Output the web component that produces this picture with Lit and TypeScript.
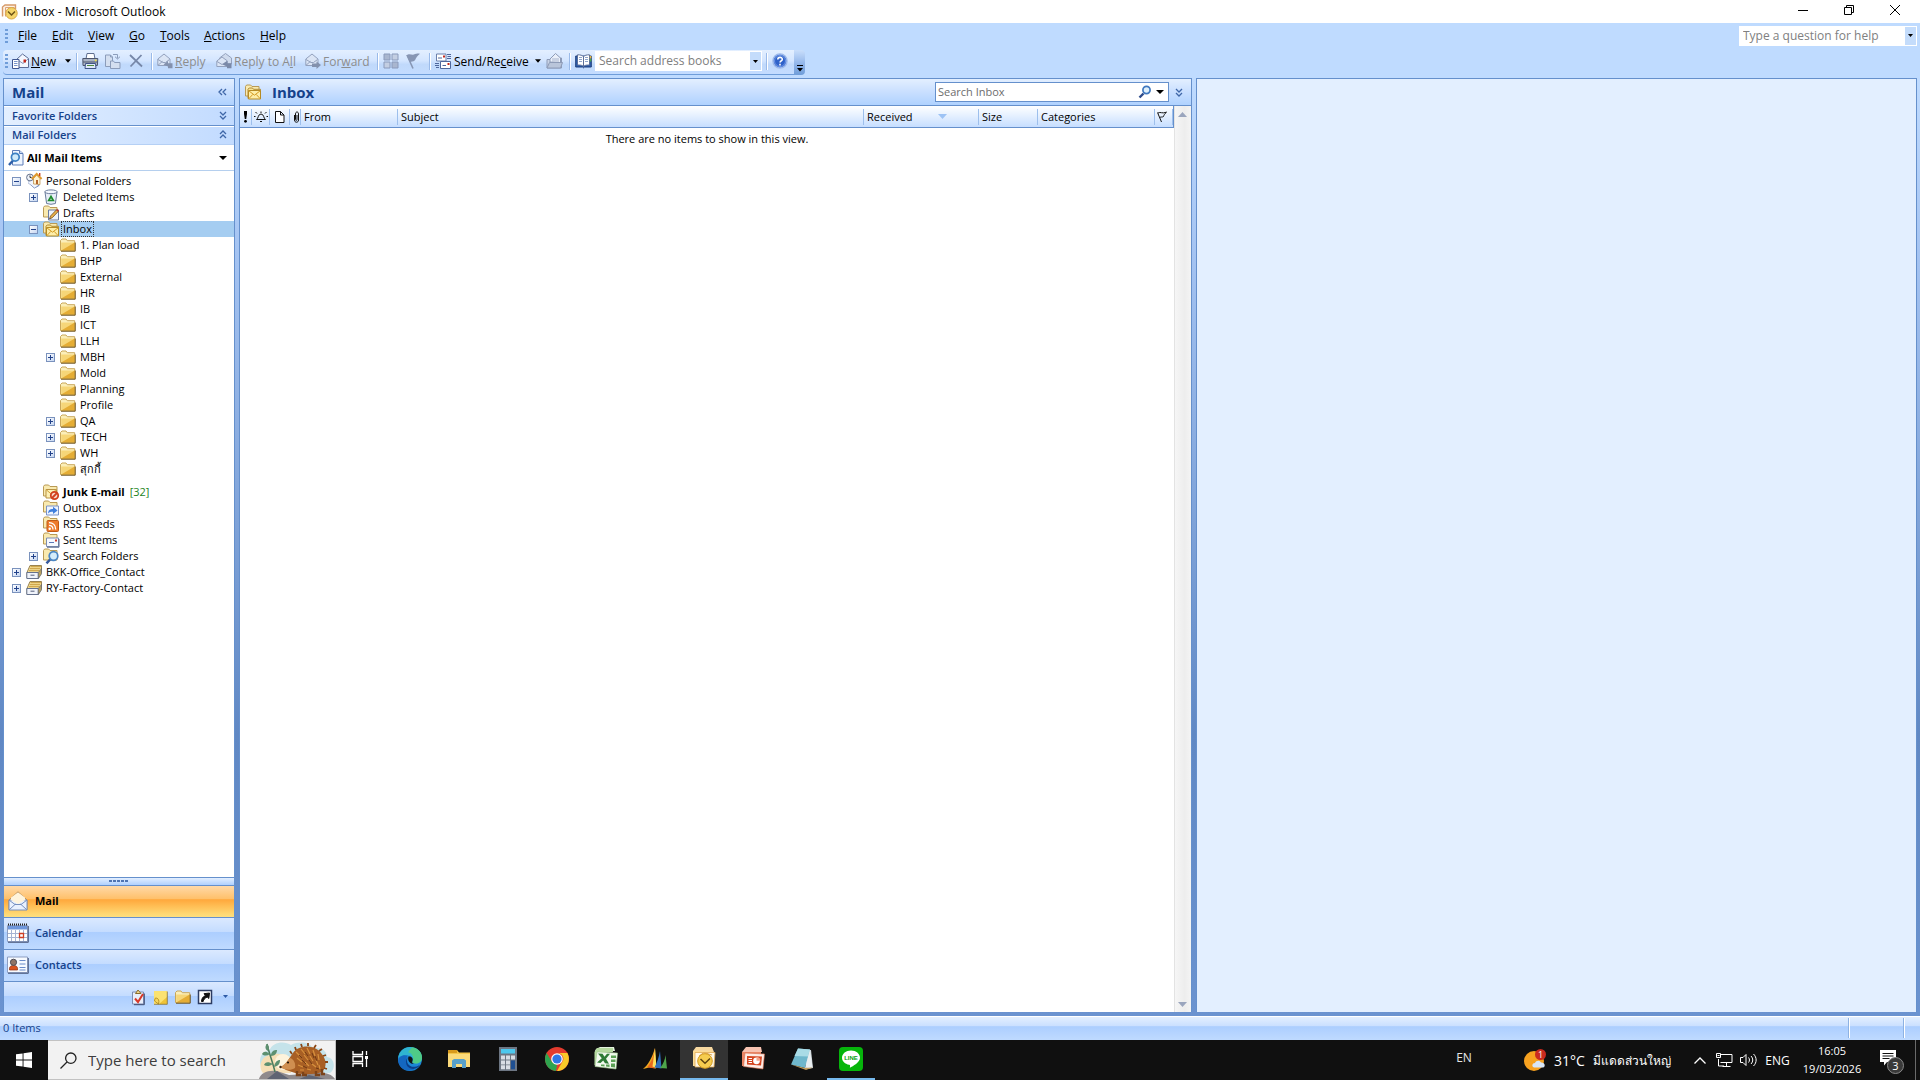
import { LitElement, html, svg, css, nothing } from "lit";
import { customElement, state } from "lit/decorators.js";
import { classMap } from "lit/directives/class-map.js";

const icon = (w: number, h: number, body: unknown, vb = `0 0 ${w} ${h}`) =>
  html`<svg class="ic" width=${w} height=${h} viewBox=${vb} aria-hidden="true">${body}</svg>`;

const folderShape = svg`
  <path d="M.5 13.500V3.500L2 2h4l1.300 1.700h7.400v9.800z" fill="#fbeeb9" stroke="#c9a75a"/>
  <path d="M1.200 13.500V5.500h13.500v8z" fill="#f6d678"/>
  <path d="M1.200 13.500L14.700 5.500v8z" fill="#e5ad35"/>
  <path d="M1 14.200h14.200V5.500" stroke="#6b4d14" fill="none"/>`;
const backFolder = svg`<path d="M.5 12V2.500L1.600 1h4L7 2.500h7V12z" fill="#f9eab0" stroke="#b99a55"/>`;

const dropTri = svg`<path d="M0 0h7L3.500 4z" fill="currentColor"/>`;
const chevDown = svg`<path d="M1 1l3 3 3-3M1 5l3 3 3-3" fill="none" stroke="#3f67a8" stroke-width="1.300"/>`;
const chevUp = svg`<path d="M1 4l3-3 3 3M1 8l3-3 3 3" fill="none" stroke="#3f67a8" stroke-width="1.300"/>`;
const chevLeft = svg`<path d="M4 1L1 4l3 3M8 1L5 4l3 3" fill="none" stroke="#3f67a8" stroke-width="1.300"/>`;
const magnifier = svg`<path d="M5.500 8.500L1.500 12.500" stroke="#2c4a8a" stroke-width="2.400"/><circle cx="8.500" cy="5" r="3.600" fill="#dff0fc" stroke="#3f78bf" stroke-width="1.700"/>`;

const ICONS: Record<string, unknown> = {
  folder: folderShape,
  home: svg`<path d="M2 9.500l6.500 5.500 4.500-2.500V8L6 6z" fill="#b9cbea" stroke="#7088b5"/><path d="M2 9.500l4-3 6 5.500-3.200 2.800z" fill="#f2f6ff"/>
    <circle cx="4" cy="4.500" r="3.400" fill="#eef2fa" stroke="#66738c"/><path d="M4 2.500v2h1.600" stroke="#333" fill="none"/>
    <path d="M7.500 5.500V11l6.500.5V5.500L10.700 2z" fill="#fff3d0" stroke="#b98a3e" stroke-width=".7"/><path d="M5.800 6L10.700.9 15.600 6" fill="none" stroke="#e09a2e" stroke-width="1.900"/><path d="M10 7h2v4h-2z" fill="#b5642a"/><path d="M13 0h1.400v3H13z" fill="#c4402a"/>`,
  trash: svg`<path d="M2 3l1.600 11.500q4.400 1.600 8.800 0L14 3z" fill="#e8eef8" stroke="#6c7d9c"/><ellipse cx="8" cy="2.800" rx="6.200" ry="1.900" fill="#f6f9ff" stroke="#6c7d9c"/><path d="M8 7.500l-2.300 4h4.600z" fill="#fff" stroke="#1d8b2e" stroke-width="1.700"/>`,
  drafts: svg`${backFolder}<path d="M5.500 5h10v10h-10z" fill="#eef3fc" stroke="#6a7ba0"/><path d="M6.500 14l1-3 6-6.200 1.700 1.700L9.300 12.700z" fill="#e8b04a" stroke="#6e4a22" stroke-width=".8"/><path d="M13.200 5.100l1.700 1.700 1-1.200-1.600-1.600z" fill="#c8372a"/>`,
  inbox: svg`${backFolder}<path d="M3 14.500V5.200L4.200 4h3.300l1 1.300h7V14.500z" fill="#f9e594" stroke="#b08a35"/><path d="M3.500 6.500h12v8.500h-12z" fill="#fdeea8" stroke="#b58b25"/><path d="M3.800 6.800l5.700 4.400 5.700-4.400M3.800 14.700l4-4.300M15.200 14.700l-4-4.300" fill="none" stroke="#d49b22"/>`,
  junk: svg`${backFolder}<path d="M3 5.500h10.500v8.500H3z" fill="#fdf0b5" stroke="#b89243"/><path d="M3.200 5.700L8.200 10l5-4.300" fill="none" stroke="#d0a03a"/><circle cx="11.500" cy="11.500" r="3.700" fill="#f6d8cc" stroke="#d2401c" stroke-width="1.800"/><path d="M9 14l5-5" stroke="#d2401c" stroke-width="1.800"/>`,
  outbox: svg`${backFolder}<path d="M3.500 6h12v9h-12z" fill="#eef4ff" stroke="#7a93c6"/><path d="M5 13.500c.2-3.500 2-4.600 5-4.600V6.800l4.600 3.600-4.600 3.600v-2.200c-2.200 0-3.600.2-5 1.700z" fill="#3f7fdd"/>`,
  rss: svg`${backFolder}<rect x="4" y="4.500" width="11.500" height="11" rx="1" fill="#ee7b2c" stroke="#c05a17"/><circle cx="6.700" cy="12.800" r="1.200" fill="#fff"/><path d="M6 9.300c2.500 0 4 1.500 4 4.200M6 6.600c4 0 6.700 2.400 6.700 6.900" fill="none" stroke="#fff" stroke-width="1.300"/>`,
  sent: svg`${backFolder}<path d="M3.500 6h12v8.500h-12z" fill="#f6f9ff" stroke="#7e8db0"/><path d="M12 7.500h2v2h-2z" fill="#d0392b"/><path d="M6 10.500h5" stroke="#5b78b8"/><path d="M4 15.200h12V7" stroke="#53648c" fill="none"/>`,
  searchf: svg`${backFolder}<path d="M7.500 11L3.500 15.300" stroke="#35599c" stroke-width="2.500"/><circle cx="10.500" cy="8" r="4.300" fill="#d4edfb" stroke="#4a86c4" stroke-width="1.700"/>`,
  pst: svg`<path d="M1 8.500L4 1.500h11.500V8l-3 6H1z" fill="#f6e199" stroke="#9a8350"/><path d="M4.500 2.700h10.500M3.800 4.700h10.500M3 6.700h10.500" stroke="#c89a3c"/><path d="M.8 8.500h11.500v6H.8z" fill="#f0f3fa" stroke="#66728e"/><path d="M12.300 14.500l3.200-4.500V4.500l-3.200 4z" fill="#b9a15e" stroke="#555f7a" stroke-width=".6"/><path d="M4.500 11.200h4" stroke="#555f7a"/>`,
  allmail: svg`<path d="M4.500.5h7l3.500 3V15h-10.500z" fill="#eef5ff" stroke="#5c7db8"/><path d="M11.500.5v3h3.500" fill="#c6d8f4" stroke="#5c7db8"/><path d="M5 10.500L1 15" stroke="#2d5ea8" stroke-width="2.400"/><circle cx="7.300" cy="7.200" r="3.900" fill="#cfeafa" stroke="#3c81c4" stroke-width="1.700"/>`,
  newmail: svg`<path d="M4.500 6.500L10.500 1l6 4.500v9h-12z" fill="#f3f7ff" stroke="#5c6d96"/><path d="M5 6.500l6 4 5-4.500" fill="none" stroke="#8797bb"/><path d="M.5 6.500h6.500v9H.5z" fill="#fff" stroke="#3f5690"/><path d="M2 8.500h3.500M2 10.500h3.500M2 12.500h3.500" stroke="#7895cc"/><path d="M11.500 6.500h2.500v3h-2.500z" fill="#c3281d"/>`,
  print: svg`<path d="M4 6l1-5.500h7L13 6z" fill="#fff" stroke="#5f6f90"/><path d="M.8 5.500h15l-.4 7H1z" fill="#aab3c4" stroke="#4b556d"/><path d="M1 9h15" stroke="#4b556d"/><path d="M3.500 10.500h10l.5 5H3z" fill="#dfe9fa" stroke="#3f5488"/><path d="M5 12.500h7" stroke="#4d8a3c"/><circle cx="13.700" cy="7.400" r=".9" fill="#f8e53c"/>`,
  move: svg`<g fill="#d4dff0" stroke="#8b9cba"><path d="M.5 2h5l2 2v9.500h-7z"/><path d="M5.500 2v2h2" fill="none"/><path d="M5.500 15.500V8h3l1 1.500h5.500v6z"/><path d="M8 1.500h4.500v4M10 3.700l2.500 2.300L15 3.700" fill="none"/></g>`,
  del: svg`<path d="M2 2l12 11.500M13.500 2l-11 11.500" stroke="#7687a8" stroke-width="1.800"/>`,
  reply: svg`<path d="M.8 6L7 1l6 5v6.500H.8z" fill="#dbe5f5" stroke="#93a1bd"/><path d="M1 6.500l5 3h2.500l4-3M1 12.300l4.500-4" fill="none" stroke="#93a1bd"/><path d="M6.500 11.500L11 8v2.300h4.500v5H11V13.500z" fill="#8391ad"/>`,
  replyall: svg`<path d="M3.500 5L9.500 .5 15.500 5v6h-12z" fill="#cfdbee" stroke="#93a1bd"/><path d="M.8 8L6 4l5.500 4v5.500H.8z" fill="#dbe5f5" stroke="#93a1bd"/><path d="M1 8.500l5 3 5-3" fill="none" stroke="#93a1bd"/><path d="M6.500 11.500L11 8v2.300h4.500v5H11V13.500z" fill="#7a89a8"/>`,
  forward: svg`<path d="M.8 6L7 1l6 5v6.500H.8z" fill="#dbe5f5" stroke="#93a1bd"/><path d="M1 6.500l5 3h2.500l4-3M1 12.300l4.500-4" fill="none" stroke="#93a1bd"/><path d="M16 12L11.500 8.500v2H7v3.500h4.500v2z" fill="#8391ad"/>`,
  grid4: svg`<g stroke="#8a9abb"><path d="M1 1h6v6H1zM9 9h6v6H9z" fill="#a9b6cf"/><path d="M9 1h6v6H9zM1 9h6v6H1z" fill="#c3cee2"/></g>`,
  flag: svg`<path d="M.5 2.500C3.500-.5 6 3 9 1c2-1 3-.5 5-.3-2.500 1.800-4 4-5 6.500-2 2-3.500 1-5 1.800z" fill="#8796b4"/><path d="M1 2l6 13.500" stroke="#8796b4" stroke-width="1.600"/>`,
  sendrecv: svg`<path d="M1.500 1h9.500v7H1.500z" fill="#fff" stroke="#6b80ad"/><path d="M5.500 8.500h10v7h-10z" fill="#fff" stroke="#4f679c"/><path d="M8 2.500h2v2H8zM12.500 10h2v2h-2z" fill="#c3281d"/><path d="M3 5h4M7.500 12.500h3.500M12 1.500h4M12.500 3.500h3.500M12 5.500h4M0 10.500h4M0 12.500h4M1 14.500h3" stroke="#4f679c"/>`,
  openf: svg`<path d="M1 15V6.500h4.500L7 5h8.500v10z" fill="#c8d3e6" stroke="#8d9bb7"/><path d="M4 9V6L9.500.5 14.500 5v5z" fill="#eaf0fa" stroke="#8d9bb7"/><path d="M6 6h7M6 8h7" stroke="#a8b4cc"/><path d="M1 15l2.500-5.500h13L14.500 15z" fill="#b9c5da" stroke="#8d9bb7"/>`,
  book: svg`<path d="M.7 3h15.600v11H9.500l-1 .8-1-.8H.7z" fill="#2d5fae" stroke="#1f3f7c"/><path d="M2.500 1.800c3 0 5 .5 6 2v9.700c-1-1.300-3-1.500-6-1.500zM14.500 1.800c-3 0-5 .5-6 2v9.700c1-1.300 3-1.500 6-1.500z" fill="#fff" stroke="#5c6f99"/><path d="M4 4.500h3M4 6.500h3M4 8.500h3M10 4.500h3M10 6.500h3M10 8.500h3" stroke="#8fa5cc"/><path d="M14.800 3h1.500v2.500h-1.500z" fill="#e8b53d"/><path d="M14.800 6h1.500v2.500h-1.500z" fill="#4ba84b"/>`,
  help: svg`<circle cx="8" cy="8" r="7" fill="#2f62c9" stroke="#9bb8ea" stroke-width="1.500"/><circle cx="8" cy="8" r="5.500" fill="none" stroke="#7ea3ee" stroke-width=".8"/><path d="M5.800 6.500c0-2.800 4.500-2.800 4.500-.3 0 1.600-2.200 1.700-2.200 3.300M8 10.800v1.700" fill="none" stroke="#fff" stroke-width="1.600"/>`,
  checklist: svg`<path d="M1.500 3h11v12h-11z" fill="#e9effb" stroke="#7d8db3"/><path d="M13.300 4.500v11.200H3" fill="none" stroke="#3c4a70"/><path d="M4.500 4.500L7 1l3 3.500z" fill="#f2d88c" stroke="#8a6c2c"/><path d="M4 9.500l3 3.500 5-8" fill="none" stroke="#d8392a" stroke-width="2"/>`,
  note: svg`<path d="M1 2h13v13H1z" fill="#fbe271"/><path d="M6 15l8-7v7z" fill="#eec339"/><path d="M2 9.500c2-1.500 5 1 3.500 5.500L1.500 12z" fill="#f7d75a" stroke="#a8801c" stroke-width=".8"/><path d="M1 15.300h13.300V2.500" stroke="#8d7022" fill="none" stroke-width=".8"/>`,
  shortcut: svg`<path d="M1.500 1.500h13v13h-13z" fill="#fff" stroke="#2c3c63" stroke-width="1.500"/><path d="M4.500 12.500c0-3 1.500-5 4-6L7 4.700 12.500 4l-.7 5.500L10.200 8C8 9 6.500 10.500 6.200 12.500z" fill="#101010" stroke="#101010"/>`,
  bell: svg`<path d="M2.500 9.500c2-1 1.500-5.500 4.500-5.500s2.500 4.500 4.500 5.500zM6 11.500h2M7 1.500V3M3 3.500L1.500 2M11 3.500L12.500 2M1.500 6.500H0M12.500 6.500H14" fill="none" stroke="#111"/>`,
  page: svg`<path d="M.5.500h5l3.500 3.500v7.500H.5zM5.500.5V4H9" fill="#fff" stroke="#111"/>`,
  clip: svg`<path d="M1.500 4v5c0 3 4 3 4 0V3c0-2.700-3-2.700-3 0v5.500c0 1.200 1.500 1.200 1.500 0V4" fill="none" stroke="#111"/>`,
  flagout: svg`<path d="M.5 1.500l4 9.500M1 2c2.500-1.500 4 1 8.500-.8C7.500 3 7 4 6.500 5.500 5 6.500 4 5.500 3 6.500" fill="none" stroke="#111"/>`,
};

const ic16 = (name: string) => icon(16, 16, ICONS[name]);
const ic17 = (name: string) => icon(17, 17, ICONS[name]);

interface Folder {
  name: string;
  icon: string;
  level: 0 | 1 | 2;
  box?: "+" | "-";
  count?: number;
  gap?: boolean;
}

const FOLDERS: Folder[] = [
  { name: "Personal Folders", icon: "home", level: 0, box: "-" },
  { name: "Deleted Items", icon: "trash", level: 1, box: "+" },
  { name: "Drafts", icon: "drafts", level: 1 },
  { name: "Inbox", icon: "inbox", level: 1, box: "-" },
  { name: "1. Plan load", icon: "folder", level: 2 },
  { name: "BHP", icon: "folder", level: 2 },
  { name: "External", icon: "folder", level: 2 },
  { name: "HR", icon: "folder", level: 2 },
  { name: "IB", icon: "folder", level: 2 },
  { name: "ICT", icon: "folder", level: 2 },
  { name: "LLH", icon: "folder", level: 2 },
  { name: "MBH", icon: "folder", level: 2, box: "+" },
  { name: "Mold", icon: "folder", level: 2 },
  { name: "Planning", icon: "folder", level: 2 },
  { name: "Profile", icon: "folder", level: 2 },
  { name: "QA", icon: "folder", level: 2, box: "+" },
  { name: "TECH", icon: "folder", level: 2, box: "+" },
  { name: "WH", icon: "folder", level: 2, box: "+" },
  { name: "สุกกี้", icon: "folder", level: 2 },
  { name: "Junk E-mail", icon: "junk", level: 1, count: 32, gap: true },
  { name: "Outbox", icon: "outbox", level: 1 },
  { name: "RSS Feeds", icon: "rss", level: 1 },
  { name: "Sent Items", icon: "sent", level: 1 },
  { name: "Search Folders", icon: "searchf", level: 1, box: "+" },
  { name: "BKK-Office_Contact", icon: "pst", level: 0, box: "+" },
  { name: "RY-Factory-Contact", icon: "pst", level: 0, box: "+" },
];

const reset = css`
  * { box-sizing: border-box; }
  :host { font-family: "Open Sans", "Noto Sans", "Liberation Sans", sans-serif; font-size: 11px; color: #000; }
  button, input, select { font: inherit; color: inherit; margin: 0; padding: 0; border: 0; background: none; border-radius: 0; outline: 0; }
  button { cursor: pointer; display: flex; align-items: center; text-align: left; white-space: nowrap; }
  ul { list-style: none; margin: 0; padding: 0; }
  h1, h2 { margin: 0; }
  .ic { display: block; flex: none; overflow: visible; }
`;

@customElement("title-and-menus")
class TitleAndMenus extends LitElement {
  static styles = [reset, css`
    :host { display: block; font-size: 12px; }
    .title { display: flex; align-items: center; height: 23px; background: #fff; padding: 0 2px; gap: 5px; }
    .title h1 { flex: 1; font-size: 12px; font-weight: 400; line-height: 22px; }
    .controls { display: flex; }
    .caption { width: 46px; height: 23px; justify-content: center; padding-bottom: 3px; }
    .menubar { display: flex; align-items: center; height: 27px; padding: 0 3px 2px 5px; background: #bfdbff; }
    .menubar nav { display: flex; flex: 1; margin-left: 2px; }
    .menubar nav button { height: 22px; padding: 0 8px; }
    .w-s { width: 34px; } .w-m { width: 36px; } .w-l { width: 41px; } .w-g { width: 31px; } .w-t { width: 44px; } .w-a { width: 56px; }
    .handle { width: 3px; height: 14px; background: repeating-linear-gradient(#6f9dd9 0 2px, transparent 2px 4px); flex: none; }
    .combo { display: flex; align-items: stretch; background: #fff; padding: 1px; height: 20px; }
    .combo input { flex: 1; min-width: 0; padding: 0 3px; line-height: 16px; }
    .combo input::placeholder { color: #808080; opacity: 1; }
    .combo button, .tools .combo button { width: 11px; height: auto; justify-content: center; background: #c4dcfb; }
    .ask { width: 178px; }
    .bar { display: flex; height: 28px; background: #bfdbff; padding-left: 3px; }
    .tools { display: flex; align-items: center; height: 25px; padding: 0 0 2px 2px; border-radius: 4px 0 0 4px; border-bottom: 1px solid #6f9dd9;
      background: linear-gradient(#e3efff, #d3e5ff 45%, #c0d9fb 60%, #c4dcff); }
    .tools button { height: 22px; gap: 2px; flex: none; }
    .sep { width: 2px; height: 17px; background: #9abae9; border-right: 1px solid #fff; flex: none; margin-right: 4px; }
    .off { color: #8d8d8d; }
    .b-new { width: 47px; margin-left: 4px; }
    .b-arrow { width: 17px; justify-content: center; }
    .b-sq { width: 23px; }
    .b-reply { width: 59px; } .b-all { width: 89px; } .b-fwd { width: 72px; } .b-send { width: 94px; }
    .b-last { width: 22px; }
    .b-book { width: 20px; }
    .addr { width: 167px; margin-right: 4px; }
    .cap { width: 11px; height: 25px; border-radius: 0 4px 4px 0; background: linear-gradient(#c9defb, #8db2e8 60%, #6f9dd9); align-items: flex-end; justify-content: center; padding-bottom: 3px; }
  `];

  private mn(before: string, key: string, after: string) {
    return html`<span>${before}<u>${key}</u>${after}</span>`;
  }

  render() {
    const tri = icon(6, 4, dropTri, "0 0 7 4");
    return html`
      <header class="title">
        ${icon(16, 16, svg`<path d="M.5 12.500V3L3 1h10.500v4" fill="#fdf1e2" stroke="#d79a6a" stroke-width="1.400"/><path d="M3.500 12.500v-9h9" fill="none" stroke="#dba27a"/><circle cx="9.500" cy="9.300" r="5.700" fill="#f5d569" stroke="#d9a842"/><path d="M6 7.500l3.500 3.500L13 7.500" fill="none" stroke="#6d5316" stroke-width="1.500"/>`)}
        <h1>Inbox - Microsoft Outlook</h1>
        <div class="controls">
          <button class="caption" aria-label="Minimize">${icon(10, 10, svg`<path d="M0 5.500h10" stroke="#000"/>`)}</button>
          <button class="caption" aria-label="Restore">${icon(10, 10, svg`<path d="M.5 2.500h7v7h-7zM2.500 2.500v-2h7v7h-2" fill="none" stroke="#000"/>`)}</button>
          <button class="caption" aria-label="Close">${icon(10, 10, svg`<path d="M0 0l10 10M10 0L0 10" stroke="#000"/>`)}</button>
        </div>
      </header>
      <div class="menubar">
        <span class="handle"></span>
        <nav aria-label="Menu bar">
          <button class="w-s">${this.mn("", "F", "ile")}</button>
          <button class="w-m">${this.mn("", "E", "dit")}</button>
          <button class="w-l">${this.mn("", "V", "iew")}</button>
          <button class="w-g">${this.mn("", "G", "o")}</button>
          <button class="w-t">${this.mn("", "T", "ools")}</button>
          <button class="w-a">${this.mn("", "A", "ctions")}</button>
          <button class="w-l">${this.mn("", "H", "elp")}</button>
        </nav>
        <div class="combo ask"><input aria-label="Help question" placeholder="Type a question for help" /><button aria-label="Recent questions">${icon(5, 3, dropTri, "0 0 7 4")}</button></div>
      </div>
      <div class="bar">
        <div class="tools" role="toolbar" aria-label="Standard">
          <span class="handle"></span>
          <button class="b-new">${ic17("newmail")}${this.mn("", "N", "ew")}</button>
          <button class="b-arrow" aria-label="New item type">${tri}</button>
          <span class="sep"></span>
          <button class="b-sq" aria-label="Print">${ic17("print")}</button>
          <button class="b-sq" aria-label="Move to folder">${ic16("move")}</button>
          <button class="b-sq" aria-label="Delete">${ic16("del")}</button>
          <span class="sep"></span>
          <button class="b-reply off">${ic16("reply")}${this.mn("", "R", "eply")}</button>
          <button class="b-all off">${ic16("replyall")}${this.mn("Reply to A", "l", "l")}</button>
          <button class="b-fwd off">${ic16("forward")}${this.mn("For", "w", "ard")}</button>
          <span class="sep"></span>
          <button class="b-sq" aria-label="Categorize">${ic16("grid4")}</button>
          <button class="b-sq" aria-label="Follow up">${ic16("flag")}</button>
          <span class="sep"></span>
          <button class="b-send">${ic17("sendrecv")}${this.mn("Send/Re", "c", "eive")}</button>
          <button class="b-arrow" aria-label="Send or receive options">${tri}</button>
          <button class="b-sq" aria-label="Open folder">${ic17("openf")}</button>
          <span class="sep"></span>
          <button class="b-book" aria-label="Address book">${ic17("book")}</button>
          <div class="combo addr"><input aria-label="Search address books" placeholder="Search address books" /><button aria-label="Recent searches">${icon(5, 3, dropTri, "0 0 7 4")}</button></div>
          <span class="sep"></span>
          <button class="b-last" aria-label="Help">${ic16("help")}</button>
        </div>
        <button class="cap" aria-label="Toolbar options">${icon(6, 7, svg`<path d="M0 .5h6" stroke="#000"/><path d="M0 3h6L3 6.500z" fill="#000"/>`)}</button>
      </div>`;
  }
}

@customElement("folder-pane")
class FolderPane extends LitElement {
  @state() private selected = "Inbox";

  static styles = [reset, css`
    :host { display: flex; flex-direction: column; border: 1px solid #6590cc; border-width: 1px 1px 0; background: #fff; min-height: 0; }
    .head { display: flex; align-items: center; justify-content: space-between; height: 27px; padding: 0 7px 0 8px; color: #15428b; border-bottom: 1px solid #6590cc;
      background: linear-gradient(#e3efff, #c9dfff 50%, #afd2ff); }
    .head h2 { font-size: 15px; line-height: 20px; }
    .sub { display: flex; align-items: center; justify-content: space-between; width: 100%; height: 20px; padding: 0 7px 2px 8px; font-weight: 600; color: #15428b;
      background: linear-gradient(90deg, #e3efff, #c2dbff); border-top: 1px solid #fff; border-bottom: 1px solid #6590cc; }
    .sub.second { border-bottom-color: #b5d0f5; height: 19px; }
    .filter { display: flex; align-items: center; height: 26px; padding: 0 7px 0 4px; gap: 3px; border-bottom: 1px solid #b5cfee; flex: none; }
    .filter select { appearance: none; flex: 1; font-weight: 700; }
    .tree { flex: 1; padding-top: 2px; min-height: 0; overflow: hidden; }
    .row { display: flex; align-items: center; height: 16px; gap: 4px; line-height: 16px; cursor: default; }
    .l0 { padding-left: 8px; } .l1 { padding-left: 25px; } .l2 { padding-left: 42px; }
    .gap { margin-top: 7px; }
    .on { background: #a5cdf1; }
    .box { width: 9px; height: 9px; border: 1px solid #7a92bd; background: linear-gradient(135deg, #fff, #c5d6f2); margin-right: 1px; flex: none; }
    .blank { width: 9px; margin-right: 1px; flex: none; }
    .label { padding: 0 1px; margin-left: -1px; white-space: nowrap; line-height: 14px; }
    .on .label { outline: 1px dotted #333; }
    .bold { font-weight: 700; }
    .count { color: #1c831c; }
    .split { height: 9px; border-top: 1px solid #6590cc; border-bottom: 1px solid #6590cc; background: linear-gradient(#e3efff, #afd0ff); display: flex; justify-content: center; padding: 2px 2px 0 0; flex: none; }
    .dots { width: 19px; height: 2px; background: repeating-linear-gradient(90deg, #4f74b3 0 3px, transparent 3px 4px); }
    .big { width: 100%; height: 32px; gap: 6px; padding: 0 0 2px 3px; font-weight: 600; color: #15428b; border-bottom: 1px solid #6590cc; flex: none;
      background: linear-gradient(#dbe9ff, #c4dcff 45%, #acceff 46%, #bfdaff); }
    .big.cur { color: #000; font-weight: 700; background: linear-gradient(#ffd9a8, #ffc069 42%, #ffa83c 44%, #ffd873 90%, #fedf7e); }
    .big .slot { width: 22px; display: flex; justify-content: center; }
    .foot { display: flex; align-items: center; justify-content: flex-end; height: 30px; gap: 6px; background: linear-gradient(#dbe9ff, #c4dcff 45%, #acceff 46%, #bfdaff); flex: none; }
  `];

  render() {
    return html`
      <div class="head"><h2>Mail</h2><button aria-label="Minimize pane">${icon(9, 8, chevLeft)}</button></div>
      <button class="sub">Favorite Folders ${icon(8, 9, chevDown)}</button>
      <button class="sub second">Mail Folders ${icon(8, 9, chevUp)}</button>
      <label class="filter">${ic16("allmail")}
        <select aria-label="Folder filter"><option>All Mail Items</option></select>${icon(8, 4, svg`<path d="M0 0h8L4 4z"/>`)}
      </label>
      <ul class="tree" role="tree" aria-label="Mail folders">
        ${FOLDERS.map((f) => html`
          <li role="treeitem" aria-selected=${f.name === this.selected}
            class=${classMap({ row: true, [`l${f.level}`]: true, gap: !!f.gap, on: f.name === this.selected })}
            @click=${() => (this.selected = f.name)}>
            ${f.box
              ? html`<button class="box" aria-label=${f.box === "+" ? "Expand" : "Collapse"}>${icon(7, 7, svg`<path d=${f.box === "+" ? "M1 3.500h5M3.500 1v5" : "M1 3.500h5"} stroke="#22428a"/>`)}</button>`
              : html`<span class="blank"></span>`}
            ${ic16(f.icon)}
            <span class=${classMap({ label: true, bold: !!f.count })}>${f.name}</span>
            ${f.count ? html`<span class="count">[${f.count}]</span>` : nothing}
          </li>`)}
      </ul>
      <div class="split"><span class="dots"></span></div>
      <button class="big cur"><span class="slot">${icon(20, 20, svg`<path d="M1 9L10 .8 19 9v9.500H1z" fill="#fdeccb" stroke="#b78d58"/><path d="M1 9h18v10H1z" fill="#e9f1ff" stroke="#7690bf"/><path d="M3 9V6.500l7-5 7 5V9l-7 4z" fill="#fff4dc"/><path d="M1.200 9.200L7 13.500h6l5.800-4.300M1.200 18.800L7.500 13M18.800 18.800L12.500 13" fill="none" stroke="#7690bf"/>`)}</span>Mail</button>
      <button class="big"><span class="slot">${icon(22, 20, svg`<path d="M.5 2.500h20v16H.5z" fill="#fff" stroke="#8d9dc0"/><path d="M1 3h19v3.500H1z" fill="#6f97dc"/><path d="M1 1.500h20" stroke="#222" stroke-dasharray="1 1" stroke-width="2"/><path d="M1 10.500h19M1 14.500h19M4.500 7v11M8.500 7v11M12.500 7v11M16.500 7v11" stroke="#a5b4d3"/><path d="M12.500 10.500h4v4h-4z" fill="#fff" stroke="#cf3f22" stroke-width="1.300"/><path d="M1 19.300h20.300V3" stroke="#4c5a7d" fill="none"/>`)}</span>Calendar</button>
      <button class="big"><span class="slot">${icon(22, 18, svg`<path d="M.5 1h20v15.500H.5z" fill="#f7faff" stroke="#8d9dc0"/><path d="M1 17.300h20.300V2" stroke="#4c5a7d" fill="none"/><path d="M2.500 14c-.5-3.500 1.500-4.500 4-4.500s4.500 1 4 4.500z" fill="#d9531f" stroke="#8d2f10" stroke-width=".7"/><circle cx="6.500" cy="6.300" r="3.100" fill="#8f7466" stroke="#4b4b54"/><path d="M12.500 4.500h6M12.500 8h6M12.500 11.500h6M12.500 14h6" stroke="#6b8cc9"/>`)}</span>Contacts</button>
      <div class="foot">
        <button aria-label="Tasks">${ic16("checklist")}</button>
        <button aria-label="Notes">${ic16("note")}</button>
        <button aria-label="Folder list">${ic16("folder")}</button>
        <button aria-label="Shortcuts">${ic16("shortcut")}</button>
        <button aria-label="Configure buttons">${icon(15, 4, svg`<path d="M4 0h5L6.500 3z" fill="#2d5aa5"/>`)}</button>
      </div>`;
  }
}

@customElement("message-list")
class MessageList extends LitElement {
  static styles = [reset, css`
    :host { display: flex; flex-direction: column; border: 1px solid #6590cc; border-width: 1px 1px 0; background: #fff; min-width: 0; }
    .head { display: flex; align-items: center; height: 27px; padding: 0 8px 0 5px; color: #15428b; border-bottom: 1px solid #6590cc;
      background: linear-gradient(#e3efff, #c9dfff 50%, #afd2ff); flex: none; }
    .head h2 { flex: 1; font-size: 15px; line-height: 20px; margin-left: 10px; }
    .find { display: flex; align-items: center; width: 234px; height: 20px; border: 1px solid #6590cc; background: #fff; color: #000; margin-right: 6px; padding-right: 4px; }
    .find input { flex: 1; min-width: 0; padding: 0 0 1px 2px; }
    .find input::placeholder { color: #6d6d6d; opacity: 1; }
    .find button { height: 18px; margin-left: 5px; }
    .body { flex: 1; display: flex; min-height: 0; }
    .area { flex: 1; min-width: 0; }
    .bar { width: 17px; display: flex; flex-direction: column; justify-content: space-between; align-items: center; padding: 6px 1px 5px 0; border-left: 1px solid #e3e3e3; background: linear-gradient(90deg, #f6f6f6, #ededed 60%, #f4f4f4); }
    table { width: 100%; table-layout: fixed; border-collapse: separate; border-spacing: 0; }
    th { height: 22px; padding: 0 0 0 3px; font-weight: 400; text-align: left; white-space: nowrap; border-bottom: 1px solid #6590cc;
      background: linear-gradient(90deg, transparent calc(100% - 1px), #9dbfec 0) 0 3px / 100% 16px no-repeat, linear-gradient(#fff, #e3efff 50%, #c6deff); }
    th:last-child { border-right: 1px solid #6590cc; padding-left: 2px; }
    th.i { padding-left: 2px; }
    .c1 { width: 12px; } .c2 { width: 18px; } .c3 { width: 20px; } .c4 { width: 11px; } .c5 { width: 97px; } .c6 { width: 115px; } .c7 { width: 59px; } .c8 { width: 117px; } .c9 { width: 19px; }
    .sorted { display: flex; align-items: center; gap: 25px; }
    .none { height: 20px; padding: 0; text-align: center; }
    th.cen { padding-left: 5px; }
  `];

  render() {
    return html`
      <div class="head">
        ${icon(17, 16, ICONS.inbox)}
        <h2>Inbox</h2>
        <div class="find">
          <input aria-label="Search Inbox" placeholder="Search Inbox" />
          <button aria-label="Search">${icon(13, 14, magnifier)}</button>
          <button aria-label="Search options">${icon(8, 4, svg`<path d="M0 0h8L4 4z" fill="#000"/>`)}</button>
        </div>
        <button aria-label="Expand query">${icon(8, 9, chevDown)}</button>
      </div>
      <div class="body">
        <div class="area">
          <table>
            <colgroup><col class="c1" /><col class="c2" /><col class="c3" /><col class="c4" /><col class="c5" /><col /><col class="c6" /><col class="c7" /><col class="c8" /><col class="c9" /></colgroup>
            <thead><tr>
              <th aria-label="Importance">${icon(5, 12, svg`<path d="M1 0h3v3l-.8 5H1.800L1 3z"/><circle cx="2.500" cy="10.300" r="1.400"/>`)}</th>
              <th class="i" aria-label="Reminder">${icon(14, 13, ICONS.bell)}</th>
              <th class="cen" aria-label="Icon">${icon(10, 12, ICONS.page)}</th>
              <th aria-label="Attachment">${icon(7, 12, ICONS.clip)}</th>
              <th>From</th><th>Subject</th>
              <th><span class="sorted">Received ${icon(9, 5, svg`<path d="M0 0h9L4.500 5z" fill="#9dc3f5"/>`)}</span></th>
              <th>Size</th><th>Categories</th>
              <th aria-label="Flag">${icon(11, 12, ICONS.flagout)}</th>
            </tr></thead>
            <tbody><tr><td class="none" colspan="10">There are no items to show in this view.</td></tr></tbody>
          </table>
        </div>
        <div class="bar" aria-hidden="true">
          ${icon(9, 5, svg`<path d="M0 5h9L4.500 0z" fill="#9aa5bd"/>`)}
          ${icon(9, 5, svg`<path d="M0 0h9L4.500 5z" fill="#9aa5bd"/>`)}
        </div>
      </div>`;
  }
}

const APPS: { name: string; art: unknown; cls?: string }[] = [
  { name: "Microsoft Edge", art: svg`<circle cx="12" cy="12" r="12" fill="#1b86d6"/><path d="M.2 11C1 4.500 6 0 12 0c7 0 12 5 12 10.500 0 4-3 6-6.300 6-2.500 0-3.900-1-3.200-2.300 1-1.500.8-5.200-4-5.700C6 8 2 9 .2 11z" fill="#2fb4d0"/><path d="M14 .3C20 1 24 5.500 24 10.500c0 4-3 6-6.300 6-2.500 0-3.900-1-3.200-2.300 1.500-3 .5-8-4.500-8.900z" fill="#58cf74" opacity=".8"/><path d="M8.300 13.500c0 5 4 8.500 8.700 8.300C12 25.500 2 23.500.3 15-.3 9 6 7 9.800 8.800 8.500 10 8.300 12 8.300 13.500z" fill="#1467c0"/><path d="M10 10c-3 5 1 10.500 7 9.800 2-.2 4-1.300 5-2-1.500 4-8 5.500-11.500 2.500C7 17.500 7.500 12 10 10z" fill="#0c3f8a"/><path d="M10.500 9.500c3.500-.5 5 2.500 3.800 4.900-.8 1.200.5 2.100 2.200 2.300-4 1-7.500-3-6-7.200z" fill="#111"/>` },
  { name: "File Explorer", art: svg`<path d="M1 4V3h9l2 2.500h11V20H1z" fill="#f5c64a"/><path d="M1 3h9v3H1z" fill="#d99a1c"/><path d="M1 7h22v13H1z" fill="#fbda7a"/><path d="M5 21v-7.500l2-1.500h10l2 1.500V21h-4v-4H9v4z" fill="#58a0c9"/>` },
  { name: "Calculator", art: svg`<path d="M3 0h18v24H3z" fill="#6d7683"/><path d="M5 2h14v4.500H5z" fill="#4cc8ee"/><path d="M5 8.500h4v4H5zM10 8.500h4v4h-4zM15 8.500h4v4h-4zM5 13.500h4v4H5zM10 13.500h4v4h-4zM5 18.300h4v4H5zM10 18.300h4v4h-4z" fill="#d8dde4"/><path d="M15 13.500h4v8.800h-4z" fill="#1f4f91"/>` },
  { name: "Google Chrome", art: svg`<circle cx="12" cy="12" r="12" fill="#e33b2e"/><path d="M1.600 6L7 15l5 3-1 6C2 23.500-2.500 13 1.600 6z" fill="#2ea44f"/><path d="M22.400 6H12c6 0 8 6 5.200 9L12 24c10 0 14.500-10.500 10.400-18z" fill="#f8ca28"/><circle cx="12" cy="12" r="5.800" fill="#fff"/><circle cx="12" cy="12" r="4.600" fill="#2f77e6"/>` },
  { name: "Microsoft Excel", art: svg`<path d="M2 2L6 0h14l1 4H1z" fill="#e5f2df"/><path d="M.5 5L3 1h16v4L6 6.500 5 19l-4.500-1z" fill="#b5d99f"/><path d="M5 5l18.500 1L22 22 1 19.500 3 5z" fill="#f2f9ee" stroke="#9cc88a" stroke-width=".6"/><path d="M4 6.500l4.500.2 2 3 2.500-3h3l-4 5 3 5-4-.4-1.800-2.700-2.700 2.300-3.500-.3 4.800-4.300z" fill="#2f7a36"/><path d="M17 8.500h5v2.500h-5zM17 12.500h4.500V15H17zM7 17.500h3.500v2L7 19zM12 17.500h3.500v2.500l-3.500-.4zM17 16.500h4v4l-4-.4z" fill="#5ba155"/>` },
  { name: "Microsoft Dynamics", art: svg`<path d="M12 1C9 11 5 18 0 22l6-1.500 7 1z" fill="#f0a81f"/><path d="M12 1v20.500l-8-1.200C9 15 11 8 12 1z" fill="#e8541d" opacity=".75"/><path d="M12 1l1.500 20-4-1.500z" fill="#ffe15c"/><path d="M17 4l1.500 17.500-7-1C14 16 16 10 17 4z" fill="#2f6fbd"/><path d="M22.500 8L24 21.500l-7-.5c3-3.500 5-8 5.500-13z" fill="#4ea64b"/>` },
  { name: "Microsoft Outlook", cls: "active", art: svg`<path d="M1 4l3-4h16l2 5-1 3H1z" fill="#f7d8a0"/><path d="M1 4h19v15H1z" fill="#fbdc96"/><path d="M3 5.500h20L22 20H3z" fill="#fff8e8" stroke="#e0aa55" stroke-width=".8"/><path d="M7 9L12 5.500 20 8" fill="#f8dfa0" stroke="#e0aa55"/><circle cx="13" cy="14" r="7.300" fill="#f6cd50" stroke="#d39a20"/><path d="M8.500 12l4.500 4.300 5-4.800" fill="none" stroke="#5f4510" stroke-width="1.500"/>` },
  { name: "Microsoft PowerPoint", art: svg`<path d="M1 5l4-5h15l1 5z" fill="#f7c3b1"/><path d="M1 5h19v14H1z" fill="#ea8564"/><path d="M4 6l19.500 1L22 22 2.500 19.500z" fill="#fdece6" stroke="#d46a48" stroke-width=".6"/><path d="M6 9l15 .5-1 9-14-1z" fill="#d4441f"/><circle cx="15.500" cy="13.800" r="3.400" fill="#fff"/><path d="M15.500 13.800V10a4 4 0 0 1 4 3.800z" fill="#f5a58c"/><path d="M7.500 11.500h3.500M7.500 13.500h3.500M7.500 15.500h3.500" stroke="#fff"/>` },
  { name: "Notepad", art: svg`<path d="M8 2l13 1 2 18-5 1z" fill="#c9d3d8"/><path d="M8 1.500l12 1-5 18.500L1 17.500z" fill="#6fb7cc"/><path d="M8 1.500l12 1-2 7L4.500 9z" fill="#a9dbe6"/><path d="M20 2.500l2.500 18L15 21z" fill="#e9eef0"/><path d="M1 17.500L15 21l8-.5-7 2.500z" fill="#c49d5a"/>` },
  { name: "LINE", cls: "running", art: svg`<rect width="24" height="24" rx="4" fill="#06b50b"/><path d="M12 3.500c-5 0-9 3.200-9 7.200 0 3.500 3 6.300 7.200 7 1.300.2.800 1.200.7 3 3-1.500 10.100-5.500 10.100-10 0-4-4-7.200-9-7.200z" fill="#fff"/><text x="12" y="13.200" text-anchor="middle" font-family="Liberation Sans" font-weight="700" font-size="6" fill="#06a00b">LINE</text>` },
];

@customElement("task-bar")
class TaskBar extends LitElement {
  static styles = [reset, css`
    :host { display: flex; height: 40px; background: #101010; color: #fff; font-size: 12px; flex: none; }
    .start { width: 48px; justify-content: center; }
    .search { display: flex; align-items: center; width: 288px; background: #f2f2f2; border: 1px solid #c2c2c2; border-left: 0; padding-left: 12px; color: #333; font-size: 15px; gap: 11px; }
    .search input { flex: 1; min-width: 0; }
    .search input::placeholder { color: #3d3d3d; opacity: 1; }
    .app { width: 48px; justify-content: center; border-bottom: 2px solid transparent; }
    .apps { display: flex; gap: 1px; margin-left: 2px; flex: 1; }
    .active { background: #333; border-color: #76b9ed; }
    .running { border-color: #76b9ed; }
    .tray { display: flex; align-items: center; }
    .lang { width: 32px; margin-right: 44px; justify-content: center; color: #e6e6e6; padding-bottom: 5px; }
    .weather { font-size: 14px; gap: 8px; width: 164px; }
    .thai { font-size: 12px; }
    .t { width: 24px; height: 40px; justify-content: center; }
    .kb { width: 35px; justify-content: center; }
    .clock { flex-direction: column; width: 74px; font-size: 11px; line-height: 18px; justify-content: center; text-align: center; }
    .note { width: 46px; justify-content: center; }
    .desk { width: 5px; height: 40px; border-left: 1px solid #6a6a6a; }
  `];

  render() {
    return html`
      <button class="start" aria-label="Start">${icon(16, 16, svg`<path d="M0 2.300L6.600 1.400v6.200H0zM7.500 1.200L16 0v7.600H7.500zM0 8.400h6.600v6.200L0 13.700zM7.500 8.400H16V16l-8.500-1.200z" fill="#fff"/>`)}</button>
      <div class="search">
        ${icon(17, 17, svg`<circle cx="10.800" cy="6.200" r="5.200" fill="none" stroke="#222" stroke-width="1.300"/><path d="M7 10L.5 16.500" stroke="#222" stroke-width="1.300"/>`)}
        <input aria-label="Search Windows" placeholder="Type here to search" />
        ${icon(76, 38, svg`
          <path d="M6 30c-8-6-6-20 4-20 4-10 16-10 22-6 8-4 18-3 22 3 8-1 14 3 14 9 8 1 9 12 3 16z" fill="#c5e3ea"/>
          <path d="M4 32c-6-8 0-18 8-18 8-3 16 0 20 6v12z" fill="#f6dfb6"/><circle cx="24" cy="21" r="8" fill="#fdf3dc"/>
          <path d="M0 38c2-6 8-9 18-8l12 4 18-1c14-3 24-1 28 5z" fill="#8f8a8c"/><path d="M18 30l12 8H8zM50 34l16 4H40z" fill="#5f6473"/>
          <path d="M22 26c6-3 8-9 12-14C39 4 55 3 62 12c6 7 6 14 1 19-8 3-22 3-30 0-4-1-8-3-11-5z" fill="#a85f24"/>
          <path d="M33 13l-2-3M37 9l-1-3M43 6l-1-3M49 5V2M55 7l2-3M60 10l3-2M64 15l3-1M66 21l3 0M65 27l3 1" stroke="#8a4716" stroke-width="1.800"/>
          <path d="M37 11l4 4M42 8l4 5M48 7l3 6M54 9l2 6M59 13l1 6M38 17l5 4M45 14l4 5M51 15l3 5M57 19l2 5M39 24l5 2M46 21l4 4M53 23l4 3M60 24l1 4M48 28l4 1M41 29l4 0" stroke="#d8923e" stroke-width="1.200"/>
          <path d="M40 14l3 3M46 11l3 4M53 12l2 5M43 19l4 4M50 19l3 4M56 15l2 5M44 25l4 2M57 27l3 1" stroke="#6f3a14" stroke-width="1"/>
          <path d="M21 26c4-1 7-6 10-9 4 1 6 6 5 10-4 3-11 2-15-1z" fill="#d08f50"/><circle cx="29" cy="21.500" r="1.100" fill="#22150c"/><circle cx="21.500" cy="26" r="1.200" fill="#3a2415"/>
          <path d="M38 30v4h4M44 31v3h4M57 30v4h4M63 28v5h3" stroke="#7b4319" stroke-width="2.400" fill="none"/>
          <path d="M16 31C14 22 10 12 8 3" stroke="#4b7a5c" stroke-width="1.500" fill="none"/>
          <path d="M8 3c-3 3-1 6 1 7 2-3 1-5-1-7zM11 13c-5-4-7-2-8 0 2 2 5 2 8 0zM12 15c0-5 3-6 6-6 0 3-2 6-6 6zM14 23c-5-3-8-2-9 1 3 2 6 1 9-1zM15 26c1-6 4-7 6-7 0 4-2 6-6 7z" fill="#5d9070"/>`)}
      </div>
      <button class="app" aria-label="Task view">${icon(18, 16, svg`<path d="M2 0v3.500h9.500V0M2 16v-3.500h9.500V16M2 6v4.500h9.500V5.500H2zM15.500 0v4M15.500 8v8" fill="none" stroke="#fff" stroke-width="1.300"/><path d="M14 5h3v3h-3z" fill="#fff"/>`)}</button>
      <div class="apps">
        ${APPS.map((a) => html`<button class="app ${a.cls ?? ""}" aria-label=${a.name}>${icon(24, 24, a.art)}</button>`)}
      </div>
      <div class="tray">
        <button class="lang">EN</button>
        <button class="weather">${icon(22, 22, svg`<circle cx="10" cy="12" r="10" fill="#f7a11f"/><path d="M10 18.500c-2.500-1-2-4.500 1-4.500 1-3 5-3 6-.5 4-.5 5 4.500 2 5z" fill="#d8e6f8"/><circle cx="16.500" cy="5.500" r="5.500" fill="#c92a20"/><text x="16.500" y="8.800" text-anchor="middle" font-family="Open Sans" font-size="9" fill="#fff">1</text>`)}<span>31°C</span><span class="thai">มีแดดส่วนใหญ่</span></button>
        <button class="t" aria-label="Show hidden icons">${icon(12, 7, svg`<path d="M.5 6.500L6 1l5.500 5.500" fill="none" stroke="#fff" stroke-width="1.300"/>`)}</button>
        <button class="t" aria-label="Network">${icon(17, 15, svg`<path d="M5 1.500h11v8H4.500M2.500 6v7H8M10.500 9.500v4M6.500 13.500h8M.5.500h4v4h-4zM1.500 2.500h2" fill="none" stroke="#fff"/>`)}</button>
        <button class="t" aria-label="Volume">${icon(17, 14, svg`<path d="M.5 4.500h2.500L6 1.500v11L3 9.500H.5zM8.500 4.500c1.300 1.500 1.300 3.500 0 5M11 3c2.300 2.500 2.300 5.500 0 8M13.500 1c3.500 3.500 3.500 8.500 0 12" fill="none" stroke="#fff"/>`)}</button>
        <button class="kb">ENG</button>
        <button class="clock"><span>16:05</span><span>19/03/2026</span></button>
        <button class="note" aria-label="3 notifications">${icon(24, 26, svg`<path d="M0 3h16v12H7l-3 3.500V15H0z" fill="#fff"/><path d="M2.500 6.500h11M2.500 9h11M2.500 11.500h7" stroke="#101010"/><circle cx="15.500" cy="18.500" r="8" fill="#3a3a3a" stroke="#8a8a8a"/><text x="15.500" y="22.500" text-anchor="middle" font-family="Open Sans" font-size="11" fill="#fff">3</text>`)}</button>
        <button class="desk" aria-label="Show desktop"></button>
      </div>`;
  }
}

@customElement("app-root")
class AppRoot extends LitElement {
  static styles = [reset, css`
    :host { display: flex; flex-direction: column; height: 100vh; overflow: hidden; }
    .panes { flex: 1; min-height: 0; display: grid; grid-template-columns: 232px minmax(0, 953fr) minmax(0, 721fr); gap: 4px; padding: 0 3px 4px; background: linear-gradient(#bfdbff, #a3c2f1 20%, #6088c4 70%, #6b93d0); }
    .reading { border: 1px solid #6590cc; border-bottom: 0; background: #e3efff; }
    .status { display: flex; align-items: center; height: 24px; padding: 0 3px 2px; color: #15428b; border-top: 1px solid #fff; flex: none;
      background: linear-gradient(#e3efff, #cbe0ff 38%, #acceff 42%, #bfdaff); }
    .status span { flex: 1; }
    .status i { width: 55px; height: 20px; border-left: 1px solid #8db2e3; box-shadow: inset 1px 0 #fff; }
    .status i:last-child { width: 14px; }
  `];

  render() {
    return html`
      <title-and-menus></title-and-menus>
      <main class="panes">
        <folder-pane></folder-pane>
        <message-list></message-list>
        <section class="reading" aria-label="Reading pane"></section>
      </main>
      <footer class="status"><span>0 Items</span><i></i><i></i></footer>
      <task-bar></task-bar>`;
  }
}
